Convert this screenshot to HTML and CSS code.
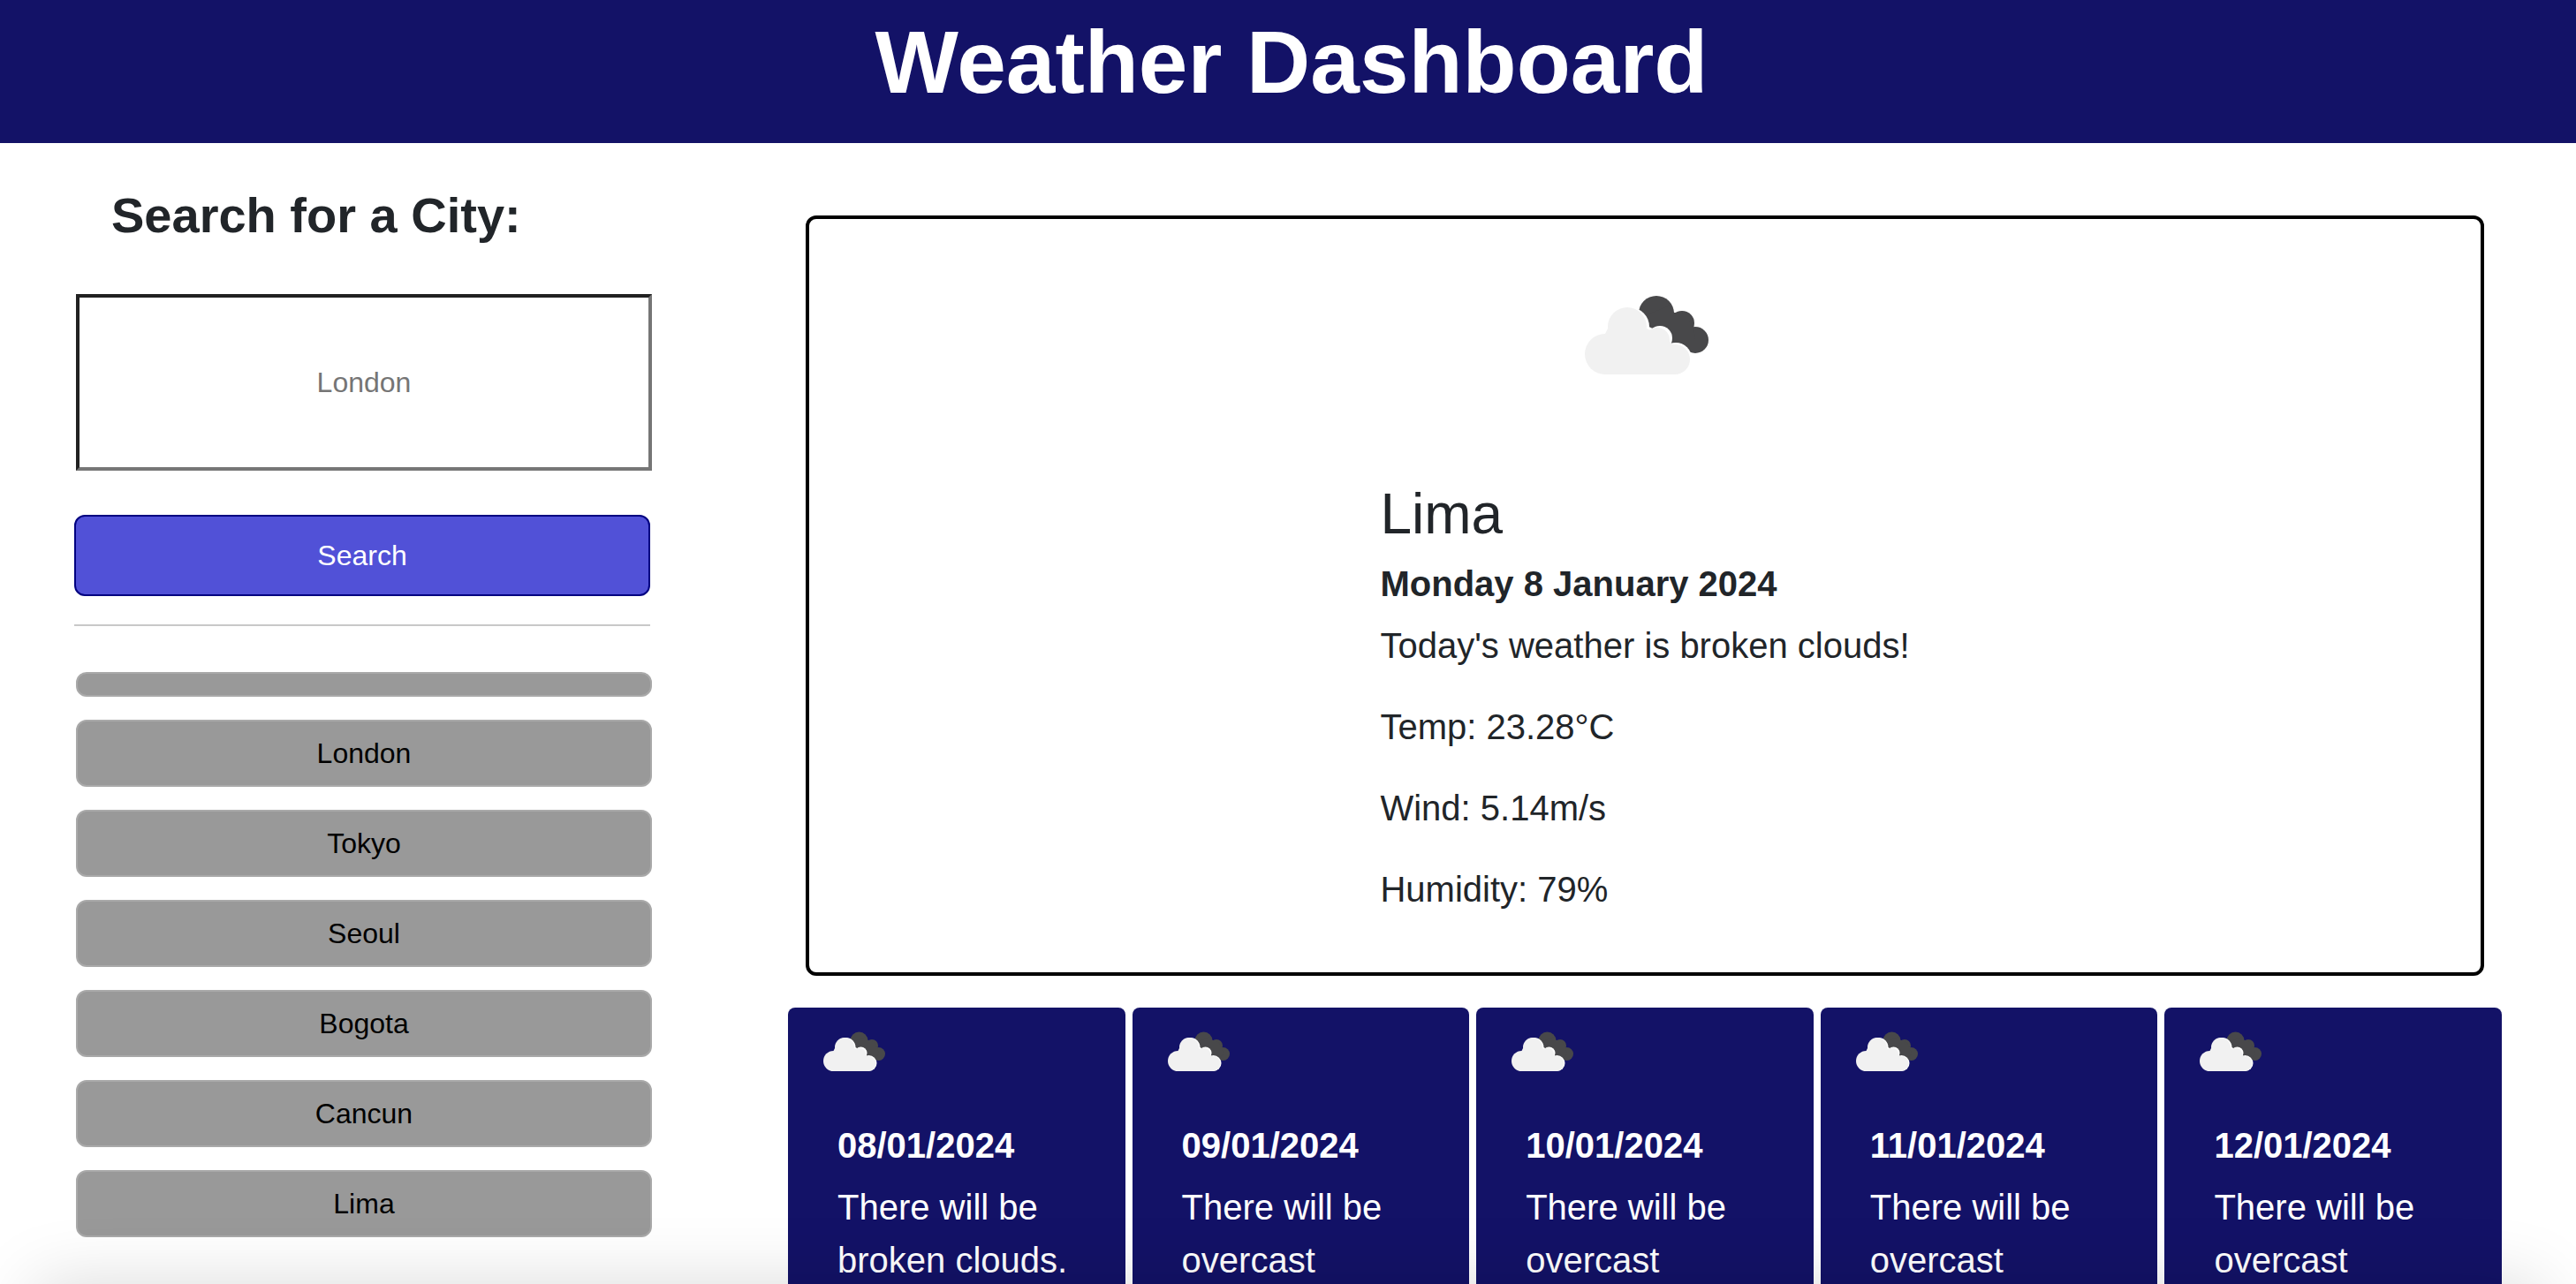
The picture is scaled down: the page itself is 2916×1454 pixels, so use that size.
FILE: index.html
```html
<!DOCTYPE html>
<html lang="en">
<head>
  <meta charset="utf-8">
  <meta name="viewport" content="width=device-width, initial-scale=1">
  <title>Weather Dashboard</title>
  <link rel="stylesheet" href="styles.css">
</head>
<body>
  <svg class="icon-defs" aria-hidden="true">
    <symbol id="broken-clouds" viewBox="0 0 200 200">
      <g fill="#48484a">
        <circle cx="113" cy="75" r="20"/>
        <circle cx="142" cy="86" r="14"/>
        <circle cx="157" cy="105" r="15"/>
        <path d="M98 78 L128 66 L133 74 L142 74 L155 90 L157 105 L148 117 L112 104 Z"/>
      </g>
      <g fill="#fff">
        <circle cx="83" cy="90" r="22"/>
        <circle cx="117" cy="103" r="14"/>
        <circle cx="135" cy="126" r="18"/>
        <path d="M84 80 L117 96 L132 112 L130 140 L84 140 Z"/>
      </g>
      <g fill="#f1f1f1">
        <circle cx="80" cy="90" r="22"/>
        <circle cx="55" cy="121" r="23"/>
        <circle cx="114" cy="105" r="14"/>
        <circle cx="134" cy="127" r="17"/>
        <path d="M58 92 L102 92 L125 104 L134 112 L134 144 L55 144 L55 98 Z"/>
      </g>
    </symbol>
  </svg>

  <header class="site-header">
    <h1 class="site-title">Weather Dashboard</h1>
  </header>

  <div class="layout">
    <aside class="sidebar">
      <form class="search-form" onsubmit="return false">
        <label class="search-label" for="search-input">Search for a City:</label>
        <input class="search-input" id="search-input" type="text" placeholder="London">
        <button class="search-button" type="submit">Search</button>
      </form>
      <hr class="divider">
      <div class="history">
        <button class="history-button" type="button" aria-label="Empty search"></button>
        <button class="history-button" type="button">London</button>
        <button class="history-button" type="button">Tokyo</button>
        <button class="history-button" type="button">Seoul</button>
        <button class="history-button" type="button">Bogota</button>
        <button class="history-button" type="button">Cancun</button>
        <button class="history-button" type="button">Lima</button>
      </div>
    </aside>

    <main class="weather">
      <section class="today">
        <svg class="today-icon" role="img" aria-label="Broken clouds"><use href="#broken-clouds"/></svg>
        <div class="today-body">
          <h2 class="today-city">Lima</h2>
          <h3 class="date">Monday 8 January 2024</h3>
          <p class="detail">Today's weather is broken clouds!</p>
          <p class="detail">Temp: 23.28°C</p>
          <p class="detail">Wind: 5.14m/s</p>
          <p class="detail">Humidity: 79%</p>
        </div>
      </section>

      <section class="forecast">
        <article class="card">
          <svg class="card-icon" role="img" aria-label="Broken clouds"><use href="#broken-clouds"/></svg>
          <div class="card-body">
            <h3 class="date">08/01/2024</h3>
            <p class="detail">There will be broken clouds.</p>
          </div>
        </article>
        <article class="card">
          <svg class="card-icon" role="img" aria-label="Overcast"><use href="#broken-clouds"/></svg>
          <div class="card-body">
            <h3 class="date">09/01/2024</h3>
            <p class="detail">There will be overcast</p>
          </div>
        </article>
        <article class="card">
          <svg class="card-icon" role="img" aria-label="Overcast"><use href="#broken-clouds"/></svg>
          <div class="card-body">
            <h3 class="date">10/01/2024</h3>
            <p class="detail">There will be overcast</p>
          </div>
        </article>
        <article class="card">
          <svg class="card-icon" role="img" aria-label="Overcast"><use href="#broken-clouds"/></svg>
          <div class="card-body">
            <h3 class="date">11/01/2024</h3>
            <p class="detail">There will be overcast</p>
          </div>
        </article>
        <article class="card">
          <svg class="card-icon" role="img" aria-label="Overcast"><use href="#broken-clouds"/></svg>
          <div class="card-body">
            <h3 class="date">12/01/2024</h3>
            <p class="detail">There will be overcast</p>
          </div>
        </article>
      </section>
    </main>
  </div>
</body>
</html>
```

FILE: styles.css
```css
*,
*::before,
*::after {
  box-sizing: border-box;
}

body {
  height: 100vh;
  margin: 0;
  overflow: hidden;
  background: #fff;
  color: #212529;
  font-family: "Liberation Sans", Arial, sans-serif;
  font-size: 40px;
  line-height: 60px;
}

/* Soft shade along the bottom edge of the window */
body::after {
  content: "";
  position: fixed;
  top: 100%;
  left: 40px;
  right: 40px;
  height: 100px;
  box-shadow: 0 0 80px rgba(0, 0, 0, 0.15);
  pointer-events: none;
}

h1,
h2,
h3,
p {
  margin: 0;
}

button,
input {
  font-family: inherit;
  font-size: 32px;
}

.icon-defs {
  display: none;
}

.site-header {
  padding: 10px 0 32px 8px;
  background: #131267;
  color: #fff;
  text-align: center;
}

.site-title {
  font-size: 100px;
  line-height: 120px;
}

.layout {
  display: grid;
  grid-template-columns: 654fr 1940fr;
  gap: 154px;
  padding: 0 84px;
}

/* Sidebar */

.sidebar {
  padding-top: 48px;
}

.search-form {
  display: flex;
  flex-direction: column;
}

.search-label {
  margin: 0 42px 56px;
  font-size: 56px;
  font-weight: bold;
  line-height: 67px;
}

.search-input {
  height: 200px;
  margin: 0 0 50px 2px;
  padding: 0 8px;
  border: 4px solid;
  border-color: #212121 #767676 #767676 #212121;
  border-radius: 0;
  background: #fff;
  text-align: center;
}

.search-input::placeholder {
  color: #757575;
}

.search-button {
  margin-right: 2px;
  padding: 20px;
  border: 2px solid #000080;
  border-radius: 12px;
  background: #5151d7;
  color: #fff;
  line-height: 48px;
}

.divider {
  height: 2px;
  margin: 32px 2px 52px 0;
  border: 0;
  background: #c8c8c8;
}

.history {
  display: flex;
  flex-direction: column;
  gap: 26px;
  margin-left: 2px;
}

.history-button {
  padding: 12px;
  border: 2px solid #a9a9a9;
  border-radius: 12px;
  background: #999;
  color: #000;
  line-height: 48px;
}

/* Current weather */

.weather {
  padding-top: 82px;
}

.today {
  display: flex;
  flex-direction: column;
  align-items: center;
  margin: 0 20px 36px;
  padding: 32px;
  border: 4px solid #000;
  border-radius: 12px;
}

.today-icon {
  width: 200px;
  height: 200px;
}

.today-body {
  padding: 64px 0 32px;
}

.today-city {
  margin-bottom: 16px;
  font-size: 64px;
  font-weight: normal;
  line-height: 77px;
}

.date {
  margin-bottom: 16px;
  font-size: 40px;
  line-height: 48px;
}

.detail + .detail {
  margin-top: 32px;
}

/* Five day forecast */

.forecast {
  display: grid;
  grid-template-columns: repeat(5, 1fr);
  gap: 8px;
}

.card {
  padding: 0 24px;
  border-radius: 8px 8px 0 0;
  background: #131267;
  color: #fff;
}

.card-icon {
  display: block;
  width: 100px;
  height: 100px;
}

.card-body {
  padding: 32px 32px 0;
}
```
